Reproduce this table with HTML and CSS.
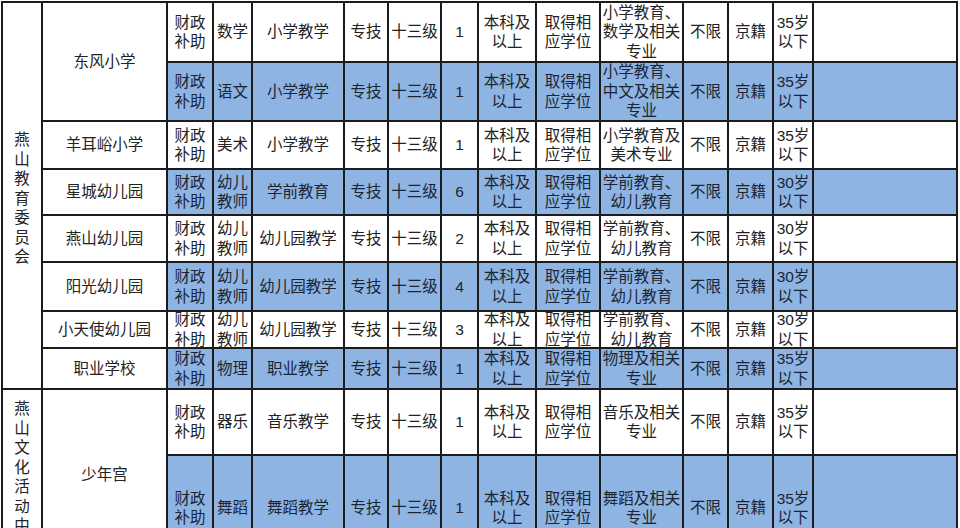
FILE: index.html
```html
<!DOCTYPE html>
<html lang="zh">
<head>
<meta charset="utf-8">
<title>招聘岗位表</title>
<link rel="stylesheet" href="styles.css">
</head>
<body>
<div class="sheet">
  <div class="c org org1">燕<br>山<br>教<br>育<br>委<br>员<br>会</div>
  <div class="c school s2">东风小学</div>
  <div class="c">财政<br>补助</div><div class="c">数学</div><div class="c">小学教学</div><div class="c">专技</div><div class="c">十三级</div><div class="c">1</div><div class="c">本科及<br>以上</div><div class="c">取得相<br>应学位</div><div class="c">小学教育、<br>数学及相关<br>专业</div><div class="c">不限</div><div class="c">京籍</div><div class="c">35岁<br>以下</div><div class="c"></div>

  <div class="c b">财政<br>补助</div><div class="c b">语文</div><div class="c b">小学教学</div><div class="c b">专技</div><div class="c b">十三级</div><div class="c b">1</div><div class="c b">本科及<br>以上</div><div class="c b">取得相<br>应学位</div><div class="c b">小学教育、<br>中文及相关<br>专业</div><div class="c b">不限</div><div class="c b">京籍</div><div class="c b">35岁<br>以下</div><div class="c b"></div>

  <div class="c school">羊耳峪小学</div>
  <div class="c">财政<br>补助</div><div class="c">美术</div><div class="c">小学教学</div><div class="c">专技</div><div class="c">十三级</div><div class="c">1</div><div class="c">本科及<br>以上</div><div class="c">取得相<br>应学位</div><div class="c">小学教育及<br>美术专业</div><div class="c">不限</div><div class="c">京籍</div><div class="c">35岁<br>以下</div><div class="c"></div>

  <div class="c school">星城幼儿园</div>
  <div class="c b">财政<br>补助</div><div class="c b">幼儿<br>教师</div><div class="c b">学前教育</div><div class="c b">专技</div><div class="c b">十三级</div><div class="c b">6</div><div class="c b">本科及<br>以上</div><div class="c b">取得相<br>应学位</div><div class="c b">学前教育、<br>幼儿教育</div><div class="c b">不限</div><div class="c b">京籍</div><div class="c b">30岁<br>以下</div><div class="c b"></div>

  <div class="c school">燕山幼儿园</div>
  <div class="c">财政<br>补助</div><div class="c">幼儿<br>教师</div><div class="c">幼儿园教学</div><div class="c">专技</div><div class="c">十三级</div><div class="c">2</div><div class="c">本科及<br>以上</div><div class="c">取得相<br>应学位</div><div class="c">学前教育、<br>幼儿教育</div><div class="c">不限</div><div class="c">京籍</div><div class="c">30岁<br>以下</div><div class="c"></div>

  <div class="c school">阳光幼儿园</div>
  <div class="c b">财政<br>补助</div><div class="c b">幼儿<br>教师</div><div class="c b">幼儿园教学</div><div class="c b">专技</div><div class="c b">十三级</div><div class="c b">4</div><div class="c b">本科及<br>以上</div><div class="c b">取得相<br>应学位</div><div class="c b">学前教育、<br>幼儿教育</div><div class="c b">不限</div><div class="c b">京籍</div><div class="c b">30岁<br>以下</div><div class="c b"></div>

  <div class="c school">小天使幼儿园</div>
  <div class="c">财政<br>补助</div><div class="c">幼儿<br>教师</div><div class="c">幼儿园教学</div><div class="c">专技</div><div class="c">十三级</div><div class="c">3</div><div class="c">本科及<br>以上</div><div class="c">取得相<br>应学位</div><div class="c">学前教育、<br>幼儿教育</div><div class="c">不限</div><div class="c">京籍</div><div class="c">30岁<br>以下</div><div class="c"></div>

  <div class="c school">职业学校</div>
  <div class="c b">财政<br>补助</div><div class="c b">物理</div><div class="c b">职业教学</div><div class="c b">专技</div><div class="c b">十三级</div><div class="c b">1</div><div class="c b">本科及<br>以上</div><div class="c b">取得相<br>应学位</div><div class="c b">物理及相关<br>专业</div><div class="c b">不限</div><div class="c b">京籍</div><div class="c b">35岁<br>以下</div><div class="c b"></div>

  <div class="c org org2">燕<br>山<br>文<br>化<br>活<br>动<br>中<br>心</div>
  <div class="c school s2">少年宫</div>
  <div class="c">财政<br>补助</div><div class="c">器乐</div><div class="c">音乐教学</div><div class="c">专技</div><div class="c">十三级</div><div class="c">1</div><div class="c">本科及<br>以上</div><div class="c">取得相<br>应学位</div><div class="c">音乐及相关<br>专业</div><div class="c">不限</div><div class="c">京籍</div><div class="c">35岁<br>以下</div><div class="c"></div>

  <div class="c b">财政<br>补助</div><div class="c b">舞蹈</div><div class="c b">舞蹈教学</div><div class="c b">专技</div><div class="c b">十三级</div><div class="c b">1</div><div class="c b">本科及<br>以上</div><div class="c b">取得相<br>应学位</div><div class="c b">舞蹈及相关<br>专业</div><div class="c b">不限</div><div class="c b">京籍</div><div class="c b">35岁<br>以下</div><div class="c b"></div>
</div>
</body>
</html>
```
FILE: styles.css
```css
html, body {
  margin: 0;
  padding: 0;
  overflow: hidden;
  background: #ffffff;
}

body {
  font-family: "Liberation Sans", "Noto Sans CJK SC", sans-serif;
  font-size: 15.5px;
  color: #222222;
}

.sheet {
  display: grid;
  grid-template-columns: 38px 123px 44px 37px 90px 42px 51px 35px 56px 62px 81px 43px 43px 38px 142px;
  grid-template-rows: 58px 57px 46px 44px 45px 47px 35px 39px 64px 104px;
  gap: 2px;
  padding: 2px;
  margin: 1px 0 0 1px;
  width: max-content;
  background: #1c1c1c;
}

.c {
  background: #ffffff;
  display: flex;
  align-items: center;
  justify-content: center;
  text-align: center;
  line-height: 19.5px;
  white-space: nowrap;
  overflow: hidden;
}

.b {
  background: #8db4e2;
  color: #1c2433;
}

.org {
  align-items: flex-start;
  line-height: 19.5px;
}

.org1 {
  grid-row: span 8;
  padding-top: 127px;
}

.org2 {
  grid-row: span 2;
  padding-top: 9px;
}

.s2 {
  grid-row: span 2;
}
```
